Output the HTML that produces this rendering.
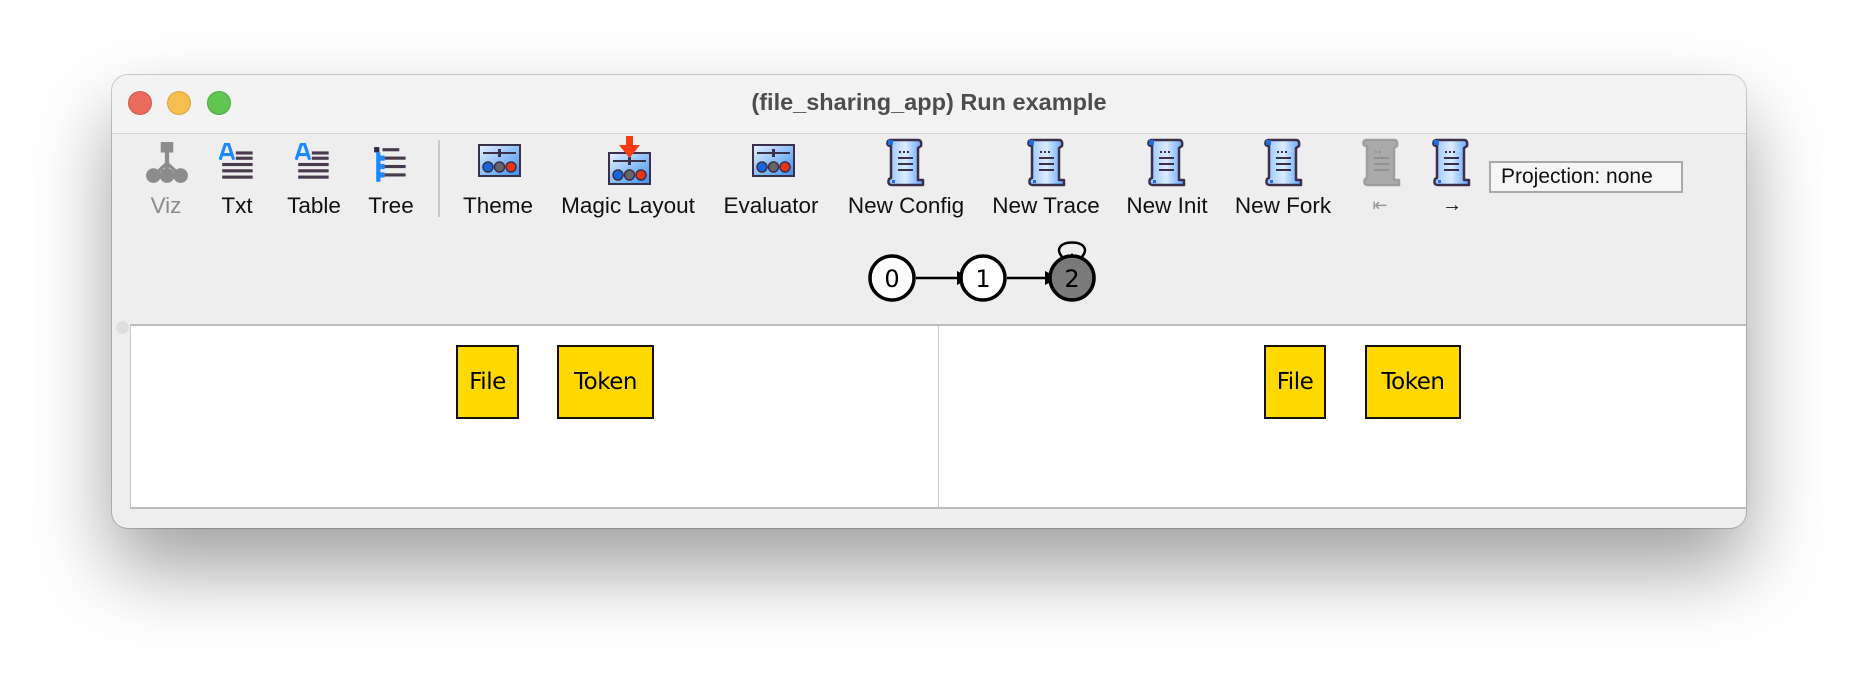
<!DOCTYPE html>
<html><head><meta charset="utf-8"><style>
html,body{margin:0;padding:0}
body{width:1858px;height:676px;background:#fff;position:relative;overflow:hidden;font-family:"Liberation Sans",sans-serif}
.win{position:absolute;left:112px;top:75px;width:1634px;height:453px;background:#eeeeee;border-radius:16px;box-shadow:0 40px 80px rgba(0,0,0,0.38),0 0 0 1px rgba(0,0,0,0.18);overflow:hidden}
.tb{position:absolute;left:0;top:0;width:100%;height:58px;background:#f3f3f3;border-bottom:1px solid #d6d6d6}
.dot{position:absolute;top:16px;width:24px;height:24px;border-radius:50%}
.title{position:absolute;left:0;width:100%;top:14px;text-align:center;font-weight:bold;font-size:23.5px;color:#4d4d4d}
.lbl{position:absolute;top:118px;font-size:22.5px;color:#111;transform:translateX(-50%);white-space:nowrap}
.ic{position:absolute}
.panel{position:absolute;left:18px;top:249px;width:1616px;height:181px;background:#fff;border-top:2px solid #bdbdbd;border-bottom:2px solid #bdbdbd;border-left:1px solid #c8c8c8}
.box{position:absolute;background:#ffd800;border:2px solid #111;box-sizing:border-box;font-family:"DejaVu Sans",sans-serif;font-size:23px;display:flex;align-items:center;justify-content:center;color:#000;letter-spacing:-0.5px}
</style></head><body>
<div class="win">
 <div class="tb">
  <div class="dot" style="left:16px;background:#ec6a5e;border:1px solid #d3574c;box-sizing:border-box"></div>
  <div class="dot" style="left:55px;background:#f4bf4f;border:1px solid #d9a53e;box-sizing:border-box"></div>
  <div class="dot" style="left:95px;background:#61c554;border:1px solid #4fa744;box-sizing:border-box"></div>
  <div class="title">(file_sharing_app) Run example</div>
 </div>

 <svg class="ic" style="left:33px;top:67px" width="44" height="42" viewBox="0 0 42 40">
  <g fill="#8c8c8c"><rect x="15" y="0" width="12" height="10"/><rect x="19" y="9" width="4" height="12"/>
  <path d="M21 18 L8 30 L11 32 L21 22 L31 32 L34 30 Z"/><rect x="19" y="20" width="4" height="10"/>
  <circle cx="8" cy="32" r="7"/><circle cx="21" cy="32" r="7"/><circle cx="34" cy="32" r="7"/></g>
 </svg>
 <svg class="ic" style="left:106px;top:68px" width="42" height="42" viewBox="0 0 40 40">
  <path d="M2 16 L7 1 L10 1 L15 16 M4 11 L13 11" stroke="#1e88ff" stroke-width="3" fill="none"/>
  <g fill="#4a3a4e"><rect x="17" y="8" width="16" height="3"/><rect x="17" y="13" width="16" height="3"/><rect x="4" y="19" width="29" height="3"/><rect x="4" y="25" width="29" height="3"/><rect x="4" y="31" width="29" height="3"/></g>
 </svg>
 <svg class="ic" style="left:182px;top:68px" width="42" height="42" viewBox="0 0 40 40">
  <path d="M2 16 L7 1 L10 1 L15 16 M4 11 L13 11" stroke="#1e88ff" stroke-width="3" fill="none"/>
  <g fill="#4a3a4e"><rect x="17" y="8" width="16" height="3"/><rect x="17" y="13" width="16" height="3"/><rect x="4" y="19" width="29" height="3"/><rect x="4" y="25" width="29" height="3"/><rect x="4" y="31" width="29" height="3"/></g>
 </svg>
 <svg class="ic" style="left:260px;top:70px" width="42" height="42" viewBox="0 0 40 40">
  <rect x="2" y="2" width="5" height="5" fill="#2a2a4a"/><rect x="4" y="7" width="4" height="28" fill="#1e88ff"/>
  <g fill="#4a3a4e"><rect x="10" y="3" width="16" height="3"/><rect x="12" y="11" width="20" height="3"/><rect x="12" y="19" width="20" height="3"/><rect x="12" y="27" width="20" height="3"/></g>
  <g fill="#1e88ff"><rect x="7" y="10" width="5" height="5"/><rect x="7" y="18" width="5" height="5"/><rect x="7" y="26" width="5" height="5"/></g>
 </svg>
 <div style="position:absolute;left:326px;top:65px;width:2px;height:77px;background:#c9c9c9"></div>

 <svg class="ic" style="left:366px;top:69px" width="43" height="33" viewBox="0 0 43 33">
  <defs><linearGradient id="bg" x1="0" y1="0" x2="1" y2="1"><stop offset="0" stop-color="#e8f2ff"/><stop offset="1" stop-color="#3a8ff0"/></linearGradient></defs>
  <rect x="1" y="1" width="41" height="31" fill="url(#bg)" stroke="#3b2f4a" stroke-width="2"/>
  <rect x="5" y="8" width="33" height="2" fill="#3b2f4a"/><rect x="20" y="5" width="3" height="8" fill="#3b2f4a"/>
  <circle cx="10" cy="23" r="5" fill="#1666e0" stroke="#3b2f4a" stroke-width="1.5"/><circle cx="21.5" cy="23" r="5" fill="#666" stroke="#3b2f4a" stroke-width="1.5"/><circle cx="33" cy="23" r="5" fill="#ee3311" stroke="#3b2f4a" stroke-width="1.5"/>
 </svg>
 <svg class="ic" style="left:496px;top:61px" width="43" height="50" viewBox="0 0 43 50">
  <rect x="1" y="17" width="41" height="31" fill="url(#bg)" stroke="#3b2f4a" stroke-width="2"/>
  <rect x="5" y="24" width="33" height="2" fill="#3b2f4a"/><rect x="20" y="21" width="3" height="8" fill="#3b2f4a"/>
  <circle cx="10" cy="39" r="5" fill="#1666e0" stroke="#3b2f4a" stroke-width="1.5"/><circle cx="21.5" cy="39" r="5" fill="#666" stroke="#3b2f4a" stroke-width="1.5"/><circle cx="33" cy="39" r="5" fill="#ee3311" stroke="#3b2f4a" stroke-width="1.5"/>
  <path d="M18 0 L25 0 L25 9 L32 9 L21.5 22 L11 9 L18 9 Z" fill="#ff3b10"/>
 </svg>
 <svg class="ic" style="left:640px;top:69px" width="43" height="33" viewBox="0 0 43 33">
  <rect x="1" y="1" width="41" height="31" fill="url(#bg)" stroke="#3b2f4a" stroke-width="2"/>
  <rect x="5" y="8" width="33" height="2" fill="#3b2f4a"/><rect x="20" y="5" width="3" height="8" fill="#3b2f4a"/>
  <circle cx="10" cy="23" r="5" fill="#1666e0" stroke="#3b2f4a" stroke-width="1.5"/><circle cx="21.5" cy="23" r="5" fill="#666" stroke="#3b2f4a" stroke-width="1.5"/><circle cx="33" cy="23" r="5" fill="#ee3311" stroke="#3b2f4a" stroke-width="1.5"/>
 </svg>

 <svg width="0" height="0" style="position:absolute"><defs>
  <linearGradient id="sg" x1="0" y1="0" x2="1" y2="0"><stop offset="0" stop-color="#8fc2ff"/><stop offset="0.5" stop-color="#dcecff"/><stop offset="1" stop-color="#5aa3ff"/></linearGradient>
  <g id="scroll">
   <path d="M6 2 L34 2 Q38 2 37 8 L34 10 L34 42 L39 42 L39 47 L8 47 Q3 47 5 41 L7 40 L7 8 Q2 8 4 3 Z" fill="url(#sg)" stroke="#3b2f4a" stroke-width="2.5" stroke-linejoin="round"/>
   <rect x="4" y="2" width="5" height="5" fill="#1e6fe0"/><rect x="8" y="42" width="3" height="3" fill="#1e6fe0"/>
   <g fill="#3b2f4a"><rect x="15" y="13" width="2" height="2"/><rect x="19" y="13" width="2" height="2"/><rect x="23" y="13" width="2" height="2"/><rect x="14" y="19" width="15" height="2"/><rect x="14" y="25" width="15" height="2"/><rect x="14" y="31" width="15" height="2"/></g>
  </g>
  <g id="scrollg">
   <path d="M6 2 L34 2 Q38 2 37 8 L34 10 L34 42 L39 42 L39 47 L8 47 Q3 47 5 41 L7 40 L7 8 Q2 8 4 3 Z" fill="#9a9a9a" stroke="#8a8a8a" stroke-width="2.5" stroke-linejoin="round"/>
   <g fill="#7a7a7a"><rect x="15" y="13" width="2" height="2"/><rect x="19" y="13" width="2" height="2"/><rect x="14" y="19" width="15" height="2"/><rect x="14" y="25" width="15" height="2"/><rect x="14" y="31" width="15" height="2"/></g>
  </g>
 </defs></svg>
 <svg class="ic" style="left:772px;top:63px" width="42" height="50"><use href="#scroll"/></svg>
 <svg class="ic" style="left:913px;top:63px" width="42" height="50"><use href="#scroll"/></svg>
 <svg class="ic" style="left:1033px;top:63px" width="42" height="50"><use href="#scroll"/></svg>
 <svg class="ic" style="left:1150px;top:63px" width="42" height="50"><use href="#scroll"/></svg>
 <svg class="ic" style="left:1248px;top:63px;opacity:.8" width="42" height="50"><use href="#scrollg"/></svg>
 <svg class="ic" style="left:1318px;top:63px" width="42" height="50"><use href="#scroll"/></svg>

 <div class="lbl" style="left:54px;color:#8a8a8a">Viz</div>
 <div class="lbl" style="left:125px">Txt</div>
 <div class="lbl" style="left:202px">Table</div>
 <div class="lbl" style="left:279px">Tree</div>
 <div class="lbl" style="left:386px">Theme</div>
 <div class="lbl" style="left:516px">Magic Layout</div>
 <div class="lbl" style="left:659px">Evaluator</div>
 <div class="lbl" style="left:794px">New Config</div>
 <div class="lbl" style="left:934px">New Trace</div>
 <div class="lbl" style="left:1055px">New Init</div>
 <div class="lbl" style="left:1171px">New Fork</div>
 <div class="lbl" style="left:1268px;color:#999;font-size:18px;top:120px">⇤</div>
 <div class="lbl" style="left:1340px;font-size:20px;top:119px">→</div>

 <div style="position:absolute;left:1377px;top:86px;width:194px;height:32px;box-sizing:border-box;border:2px solid #a9a9a9;background:#f6f6f6;font-size:21px;line-height:28px;padding-left:10px;color:#111">Projection: none</div>

 <svg class="ic" style="left:0;top:0" width="1634" height="250">
  <g stroke="#000" stroke-width="2.5" fill="none">
   <line x1="804" y1="203" x2="852" y2="203"/><line x1="895" y1="203" x2="941" y2="203"/>
   <path d="M952 184 C930 162 990 162 968 184"/>
  </g>
  <polygon points="859,203 845,196 845,210" fill="#000"/>
  <polygon points="947,203 933,196 933,210" fill="#000"/>
  <polygon points="960,178 952,189 968,189" fill="#000"/>
  <circle cx="780" cy="203" r="22" fill="#fff" stroke="#000" stroke-width="3.5"/>
  <circle cx="871" cy="203" r="22" fill="#fff" stroke="#000" stroke-width="3.5"/>
  <circle cx="960" cy="203" r="22" fill="#7a7a7a" stroke="#000" stroke-width="3.5"/>
  <g font-family="DejaVu Sans,sans-serif" font-size="24" text-anchor="middle"><text x="780" y="212">0</text><text x="871" y="212">1</text><text x="960" y="212">2</text></g>
 </svg>

 <div style="position:absolute;left:4px;top:246px;width:13px;height:13px;border-radius:50%;background:#dedede"></div>
 <div class="panel">
  <div style="position:absolute;left:807px;top:0;width:1px;height:100%;background:#c8c8c8"></div>
  <div class="box" style="left:325px;top:19px;width:63px;height:74px">File</div>
  <div class="box" style="left:426px;top:19px;width:97px;height:74px">Token</div>
  <div class="box" style="left:1133px;top:19px;width:62px;height:74px">File</div>
  <div class="box" style="left:1234px;top:19px;width:96px;height:74px">Token</div>
 </div>
</div>
</body></html>
